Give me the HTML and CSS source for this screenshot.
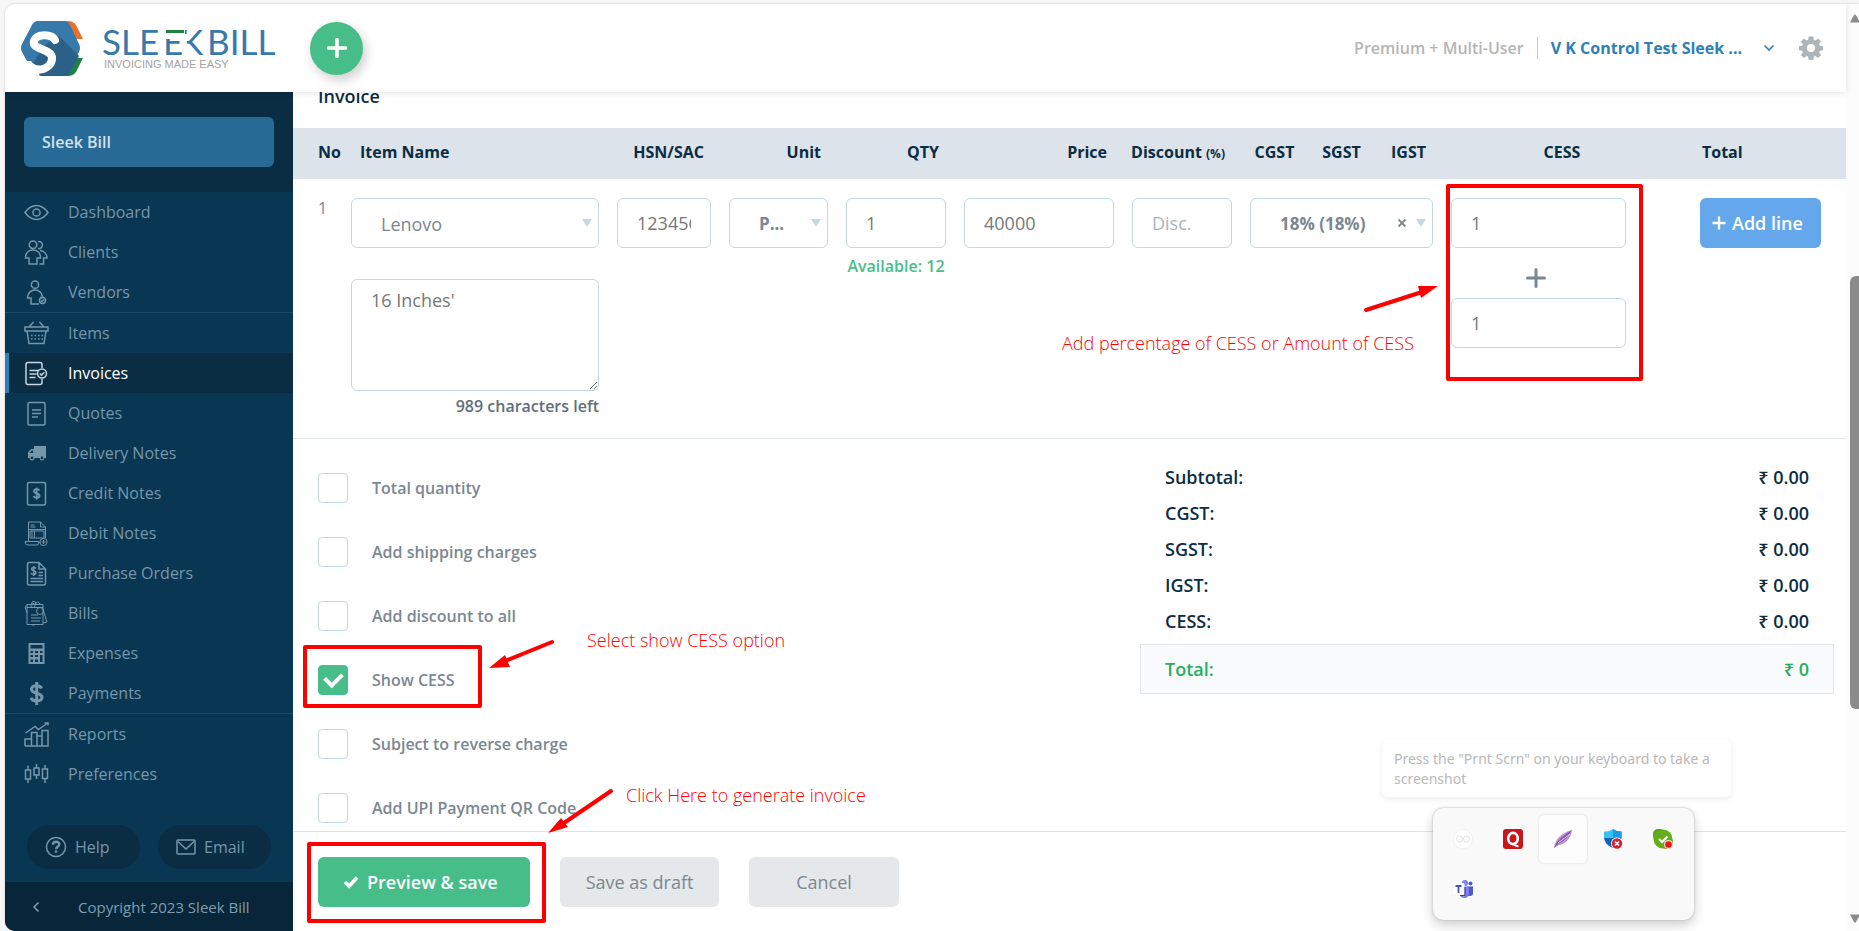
FILE: index.html
```html
<!DOCTYPE html>
<html lang="en">
<head>
<meta charset="utf-8">
<title>Sleek Bill - Invoice</title>
<link rel="stylesheet" href="styles.css">
</head>
<body>
<div class="window">
  <div class="app">
    <header class="topbar">
      <a class="logo" href="#" aria-label="Sleek Bill">
        <svg width="262" height="60" viewBox="0 0 262 60">
          <path d="M43 3h6q5 0 8 4l7 14H54z" fill="#e8702a"/>
          <path d="M64 40l-7 14q-3 4-8 4h-6l11-18z" fill="#1f8340"/>
          <path d="M19 3h25q5 0 7 4l9 19q2 4 0 8L50 54q-2 4-7 4H21q-5 0-7-4L3 34q-2-4 0-8L13 7q2-4 6-4z" fill="#3779aa"/>
          <path d="M40 18l20 20-8 15q-2 5-8 5H22l-8-13 12-18z" fill="#2b6089"/>
          <path d="M36 22c-3-6-18-7-21 1-3 9 18 7 18 17 0 11-14 15-22 8" fill="none" stroke="#fff" stroke-width="8" stroke-linecap="round"/>
          <path d="M7 43l5 0 9 15q-5 0-8-4z" fill="#fff"/>
          <text class="logo-name" x="83" y="37">SLE</text>
          <text class="logo-name" x="144" y="37">E</text>
          <text class="logo-name" x="161" y="37">K</text>
          <text class="logo-name" x="188" y="37">BILL</text>
          <rect x="144" y="10" width="22" height="11" fill="#fff"/>
          <rect x="147" y="12" width="18" height="3" fill="#1f8340"/>
          <rect x="163" y="16" width="5" height="24" fill="#fff"/>
          <text class="logo-tag" x="85" y="50">INVOICING MADE EASY</text>
        </svg>
      </a>
      <button class="add-btn" type="button" aria-label="Add new">
        <svg width="20" height="20" viewBox="0 0 20 20"><path d="M10 1.500v17M1.500 10h17" stroke="#fff" stroke-width="3.500" stroke-linecap="round"/></svg>
      </button>
      <span class="plan">Premium + Multi-User</span>
      <button class="account" type="button">V K Control Test Sleek ...
        <svg width="12" height="8" viewBox="0 0 12 8"><path d="M1.500 1.500L6 6l4.500-4.500" fill="none" stroke="#2e80b8" stroke-width="1.600"/></svg>
      </button>
      <button class="gear" type="button" aria-label="Settings">
        <svg width="24" height="24" viewBox="0 0 24 24" fill="#adb5bb"><path fill-rule="evenodd" d="M9.700.5h4.600l.5 3.200 1.600.7 2.700-2 3 3-2 2.700.7 1.600 3.200.5v4l-3.200.5-.7 1.700 2 2.600-3 3.100-2.700-2-1.600.7-.5 3.200H9.700l-.5-3.200-1.600-.7-2.700 2-3-3.100 2-2.600-.7-1.700L0 14.200v-4l3.200-.5.7-1.600-2-2.700 3-3 2.700 2 1.600-.7zM12 8a4 4 0 100 8 4 4 0 000-8z"/></svg>
      </button>
    </header>

    <div class="body">
      <aside class="sidebar">
        <div class="brand"><button class="brand-btn" type="button">Sleek Bill</button></div>
        <nav class="nav">
          <div class="nav-group">
            <a class="nav-item" href="#"><svg class="ico" viewBox="0 0 25 25"><path d="M1 12.500Q6 5.500 12.500 5.500T24 12.500Q19 19.500 12.500 19.500T1 12.500z"/><circle cx="12.500" cy="12.500" r="3.600"/></svg>Dashboard</a>
            <a class="nav-item" href="#"><svg class="ico" viewBox="0 0 25 25"><circle cx="9" cy="4.700" r="3.800"/><path d="M5 24v-6H1.500c0-5 3-8 7.500-8s7.500 3 7.500 8H13v6zM14 1.500a3.600 3.600 0 110 7M16 10.500c4 .5 7 3.500 7 7.500h-3.500v6H15.500"/></svg>Clients</a>
            <a class="nav-item" href="#"><svg class="ico" viewBox="0 0 25 25"><circle cx="11" cy="4.700" r="3.600"/><path d="M16 17.500c1.500 0 2.500-.5 2.500-1-1-4-3.500-6.500-7.500-6.500s-7.500 3-7.500 8H7v6h8"/><circle cx="18.500" cy="20.500" r="3"/><path d="M17 20.500l1 1 2-2"/></svg>Vendors</a>
          </div>
          <div class="nav-group">
            <a class="nav-item" href="#"><svg class="ico" viewBox="0 0 25 25"><path d="M1 6h23v4H1zM3 10l2 12.500h15L22 10M5 6l4.500-5M20 6l-4.500-5"/><path d="M7 14.500h12M7 18h12" stroke-dasharray="1.500 2"/></svg>Items</a>
            <a class="nav-item active" href="#"><svg class="ico" viewBox="0 0 25 25"><path d="M18 7V3.500Q18 1.500 16 1.500H4Q2 1.500 2 3.500v18q0 2 2 2h12q2 0 2-2V18M5.500 9.500h9M5.500 13h7M5.500 16.500h6"/><circle cx="18" cy="12.500" r="4.500"/><path d="M15.800 12.500l1.700 1.700 2.800-3"/></svg>Invoices</a>
            <a class="nav-item" href="#"><svg class="ico" viewBox="0 0 25 25"><rect x="4" y="1.500" width="17" height="22.500" rx="1.500"/><path d="M8 9h9M8 12.500h9M8 16h6"/></svg>Quotes</a>
            <a class="nav-item" href="#"><svg class="ico" viewBox="0 0 25 25"><path class="solid" fill-rule="evenodd" d="M10 5h12v12h-1.500a2.500 2.500 0 01-5 0h-5a2.500 2.500 0 01-5 0H4v-5.500L7 8h3zM8 9.500L5.500 12H9V9.500zM8 15.500a1.400 1.400 0 100 2.800 1.400 1.400 0 000-2.800zm10 0a1.400 1.400 0 100 2.800 1.400 1.400 0 000-2.800z"/></svg>Delivery Notes</a>
            <a class="nav-item" href="#"><svg class="ico" viewBox="0 0 25 25"><rect x="3.500" y="1.500" width="18" height="22.500" rx="1.500"/><path d="M15.500 9.500c-1-2-5.500-1.800-5.500.7 0 2.800 5.500 1.500 5.500 4.600 0 2.500-5 2.700-6 .4M12.700 6.500v12" stroke-width="1.800"/></svg>Credit Notes</a>
            <a class="nav-item" href="#"><svg class="ico thin" viewBox="0 0 25 25"><path d="M4.500 20V1h12l5 5v11M16.500 1v5h5M6.500 4h4M6.500 6h5M4.500 8.500h17M6 10h14v7H6zM8 10v7M10.500 10v7M1 20.500h14q0 3.500-2 3.500H4q-3 0-3-3.500z"/><circle cx="19.500" cy="21" r="3.600"/><path d="M17.500 21h4M19.500 19v4"/></svg>Debit Notes</a>
            <a class="nav-item" href="#"><svg class="ico" viewBox="0 0 25 25"><path d="M15 1.500H5Q3.500 1.500 3.500 3v19.500q0 1.500 1.500 1.500h15q1.500 0 1.500-1.500V8zM15 1.500V8h6.500M14.500 11.500H19M14.500 14.500H19M6.500 17.500H19M6.500 20.500H19M12 7.500c-1-1.500-4.500-1.300-4.500.6 0 2.100 4.500 1.300 4.500 3.600 0 2-4 2.200-5 .4M9.700 5v10"/></svg>Purchase Orders</a>
            <a class="nav-item" href="#"><svg class="ico thin" viewBox="0 0 25 25"><path d="M3 3.500h16v20H3zM3 6.500h16M3 12L1 6l2-1M19 8l4 13-4 1M7 14h7M7 17h10M7 20h9M8 23.500q1 2 3 0M8 4q-1-4 2-3.500t2 3M11 3q3-4 5 0"/><circle cx="9" cy="4.500" r="2"/><circle cx="16" cy="10" r="3.500"/></svg>Bills</a>
            <a class="nav-item" href="#"><svg class="ico" viewBox="0 0 25 25"><path class="solid" fill-rule="evenodd" d="M4.500 2h16v21h-16zM6.500 4v3.500h12V4zM6.500 10v2h2.500v-2zm4.500 0v2h3v-2zm5 0v2h2.500v-2zM6.500 14v2h2.500v-2zm4.500 0v2h3v-2zm5 0v7h2.500v-7zM6.500 18.500V21h2.500v-2.500zm4.500 0V21h3v-2.500z"/></svg>Expenses</a>
            <a class="nav-item" href="#"><svg class="ico bold" viewBox="0 0 25 25"><path d="M17.500 7.500c-1.500-4-10-3.500-10 .8 0 5 10.500 3 10.500 8 0 4.500-9.500 5-11 .5M12.700 1v23"/></svg>Payments</a>
          </div>
          <div class="nav-group">
            <a class="nav-item" href="#"><svg class="ico" viewBox="0 0 25 25"><path d="M1 24h23V8.500h-6V24M1 24v-7h6.500V24M7.500 17v-6.500H13V24M13 14h5M1.500 11L11 4.500l3.500 3L23 1.500M20.500 1h3.500v2.500"/></svg>Reports</a>
            <a class="nav-item" href="#"><svg class="ico" viewBox="0 0 25 25"><path d="M1.500 8h5v9h-5zM10 6h5v7h-5zM18.500 7h5v9.500h-5zM4 3.500V8M4 17v4M12.500 2v4M12.500 13v4M21 3v4M21 16.500V21"/></svg>Preferences</a>
          </div>
        </nav>
        <div class="help-row">
          <button class="pill" type="button"><svg width="22" height="22" viewBox="0 0 22 22"><circle cx="11" cy="11" r="9.500"/><path d="M7.800 8.700c.2-4 6.800-3.800 6.500-.2-.2 2-3.200 2-3.200 4.700M11 14.500v2.200" stroke-width="2.400"/></svg>Help</button>
          <button class="pill" type="button"><svg width="20" height="16" viewBox="0 0 20 16"><rect x="1" y="1" width="18" height="14" rx="1"/><path d="M2 2.500l8 7.500 8-7.500"/></svg>Email</button>
        </div>
        <footer class="side-foot">
          <button class="collapse" type="button" aria-label="Collapse"><svg width="8" height="12" viewBox="0 0 8 12"><path d="M6.500 1.500L2 6l4.500 4.500" fill="none" stroke="#7f9db0" stroke-width="1.500"/></svg></button>
          <span>Copyright 2023 Sleek Bill</span>
        </footer>
      </aside>

      <main class="content">
        <h2 class="title">Invoice</h2>
        <table class="lines">
          <colgroup><col class="c-no"><col><col class="c-hsn"><col class="c-unit"><col class="c-qty"><col class="c-price"><col class="c-disc"><col class="c-gst"><col class="c-gst"><col class="c-gst"><col class="c-cess"><col class="c-total"></colgroup>
          <thead>
            <tr><th class="first">No</th><th class="name">Item Name</th><th>HSN/SAC</th><th>Unit</th><th>QTY</th><th>Price</th><th>Discount <small>(%)</small></th><th class="mid">CGST</th><th class="mid">SGST</th><th class="mid">IGST</th><th class="mid">CESS</th><th class="last">Total</th></tr>
          </thead>
          <tbody>
            <tr>
              <td class="first num">1</td>
              <td>
                <div class="pick"><select aria-label="Item"><option>Lenovo</option></select><i class="tri"></i></div>
                <textarea class="desc" aria-label="Description">16 Inches'</textarea>
                <p class="left">989 characters left</p>
              </td>
              <td><input class="field" type="text" aria-label="HSN/SAC" value="12345678"></td>
              <td><div class="pick strong"><select aria-label="Unit"><option>P...</option></select><i class="tri"></i></div></td>
              <td><input class="field" type="text" aria-label="Quantity" value="1"><p class="avail">Available: 12</p></td>
              <td><input class="field" type="text" aria-label="Price" value="40000"></td>
              <td><input class="field" type="text" aria-label="Discount" placeholder="Disc."></td>
              <td colspan="3"><div class="pick strong"><select aria-label="GST"><option>18% (18%)</option></select><button class="clear" type="button" aria-label="Clear"><svg width="10" height="10" viewBox="0 0 10 10"><path d="M1.500 1.500l7 7M8.500 1.500l-7 7" stroke="#7b8791" stroke-width="1.800"/></svg></button><i class="tri"></i></div></td>
              <td>
                <div class="cess">
                  <input class="field" type="text" aria-label="CESS percent" value="1">
                  <svg class="cess-plus" width="20" height="20" viewBox="0 0 20 20"><path d="M10 1.500v17M1.500 10h17" stroke="#7b8791" stroke-width="3" stroke-linecap="round"/></svg>
                  <input class="field" type="text" aria-label="CESS amount" value="1">
                </div>
              </td>
              <td class="last"><button class="btn blue" type="button"><svg width="14" height="14" viewBox="0 0 14 14"><path d="M7 .5v13M.5 7h13" stroke="#fff" stroke-width="2.400"/></svg>Add line</button></td>
            </tr>
          </tbody>
        </table>

        <section class="lower">
          <div class="options">
            <label class="opt"><input type="checkbox">Total quantity</label>
            <label class="opt"><input type="checkbox">Add shipping charges</label>
            <label class="opt"><input type="checkbox">Add discount to all</label>
            <label class="opt"><input type="checkbox" checked>Show CESS</label>
            <label class="opt"><input type="checkbox">Subject to reverse charge</label>
            <label class="opt"><input type="checkbox">Add UPI Payment QR Code</label>
          </div>
          <dl class="totals">
            <div><dt>Subtotal:</dt><dd>₹ 0.00</dd></div>
            <div><dt>CGST:</dt><dd>₹ 0.00</dd></div>
            <div><dt>SGST:</dt><dd>₹ 0.00</dd></div>
            <div><dt>IGST:</dt><dd>₹ 0.00</dd></div>
            <div><dt>CESS:</dt><dd>₹ 0.00</dd></div>
            <div class="grand"><dt>Total:</dt><dd>₹ 0</dd></div>
          </dl>
        </section>

        <div class="actions">
          <button class="btn green" type="button"><svg width="16" height="14" viewBox="0 0 16 14"><path d="M2 7l4.200 4.200L14 2.500" fill="none" stroke="#fff" stroke-width="3.600"/></svg>Preview &amp; save</button>
          <button class="btn grey" type="button">Save as draft</button>
          <button class="btn grey wide" type="button">Cancel</button>
        </div>
      </main>
    </div>
  </div>
  <div class="scroll">
    <svg class="arrow-up" width="12" height="9" viewBox="0 0 12 9"><path d="M1 8.500L5 1q1-1 2 0l4 7.500z" fill="#8b8b8b"/></svg>
    <div class="thumb"></div>
    <svg class="arrow-down" width="12" height="9" viewBox="0 0 12 9"><path d="M1 .5h10L7 8q-1 1-2 0z" fill="#8b8b8b"/></svg>
  </div>
</div>

<div class="note-box box-cess"></div>
<div class="note-box box-show"></div>
<div class="note-box box-save"></div>
<p class="note note-cess">Add percentage of CESS or Amount of CESS</p>
<p class="note note-show">Select show CESS option</p>
<p class="note note-save">Click Here to generate invoice</p>
<svg class="note-arrow arrow-cess" width="80" height="32" viewBox="0 0 80 32"><path d="M4 28L60 10" stroke="red" stroke-width="4" stroke-linecap="round"/><path d="M76 4L56 4l3 12z" fill="red"/></svg>
<svg class="note-arrow arrow-show" width="72" height="34" viewBox="0 0 72 34"><path d="M67 4L20 23" stroke="red" stroke-width="4" stroke-linecap="round"/><path d="M4 30L20 17l5 12z" fill="red"/></svg>
<svg class="note-arrow arrow-save" width="72" height="50" viewBox="0 0 72 50"><path d="M67 4L17 38" stroke="red" stroke-width="4" stroke-linecap="round"/><path d="M4 46L17 31l7 9z" fill="red"/></svg>

<div class="tip">Press the "Prnt Scrn" on your keyboard to take a screenshot</div>
<div class="tray">
  <span class="cell"><svg width="20" height="20" viewBox="0 0 20 20"><circle cx="10" cy="10" r="9.500" fill="#fff" stroke="#ececec" stroke-dasharray="2 1"/><circle cx="6.500" cy="10" r="3" fill="none" stroke="#e2e2e2"/><circle cx="13.500" cy="10" r="3" fill="none" stroke="#e2e2e2"/></svg></span>
  <span class="cell"><svg width="20" height="20" viewBox="0 0 20 20"><rect width="20" height="20" rx="3" fill="#c8161d"/><ellipse cx="10" cy="9.500" rx="4.800" ry="5.600" fill="none" stroke="#fff" stroke-width="2.600"/><path d="M10 14.500q2 3 5.500 2.500" fill="none" stroke="#fff" stroke-width="2.200"/></svg></span>
  <span class="cell on"><svg width="20" height="20" viewBox="0 0 20 20"><path d="M1 19C2 10 8 4 19 1c-1 8-6 14-13 15z" fill="#b79ad0"/><path d="M1 19C4 11 9 8 18.500 1 14 12 8 12 3 17z" fill="#8a4fb3"/><path d="M5 14L17 5" stroke="#e7dcf0"/></svg></span>
  <span class="cell"><svg width="20" height="20" viewBox="0 0 20 20"><path d="M10 0q4 3 8.500 2.500V9q0 7-8.500 10z" fill="#1283da"/><path d="M10 0Q6 3 1 2.500V9h9z" fill="#35c1f1"/><path d="M10 2.500V9h8.500V2.500Q14 3 10 0z" fill="#1a9be6"/><path d="M1 9h9v10Q2 16 1 9z" fill="#0f62b8"/><circle cx="14" cy="14.500" r="6" fill="#fff"/><circle cx="14" cy="14.500" r="5.200" fill="#db1f2d"/><path d="M12 12.500l4 4M16 12.500l-4 4" stroke="#fff" stroke-width="1.600"/></svg></span>
  <span class="cell"><svg width="20" height="20" viewBox="0 0 20 20"><rect width="12" height="12" rx="5" fill="#5ba314"/><rect x="8" y="8" width="12" height="12" rx="5" fill="#5ba314"/><circle cx="10" cy="10" r="9.500" fill="#64ad1b"/><path d="M6 10l3 3 5.500-5.500" fill="none" stroke="#fff" stroke-width="2.200"/><circle cx="15.500" cy="15.500" r="4.500" fill="#f3dede"/><circle cx="15.500" cy="15.500" r="3.300" fill="#e81717"/></svg></span>
  <span class="cell"><svg width="20" height="20" viewBox="0 0 20 20"><circle cx="12" cy="4" r="3" fill="#7b83eb"/><circle cx="17.500" cy="4.500" r="2" fill="#5059c9"/><path d="M14 7.500h6V14q0 3-3 3h-3z" fill="#5059c9"/><path d="M7 7.500h9V14q0 5-4.500 5T7 15z" fill="#7b83eb"/><rect y="4" width="11.500" height="12" rx="1" fill="#fff"/><path d="M7 16.500h5V8" stroke="#3b3f7d" fill="none"/><path d="M2.500 7h6M5.500 7v7" stroke="#4b53bc" stroke-width="1.800"/></svg></span>
</div>
</body>
</html>
```
FILE: styles.css
```css
* { box-sizing: border-box; }
body { margin: 0; height: 100vh; padding: 4px 0 0 5px; background: #f6f6f6; font: 16px/24px "Open Sans", "Noto Sans", sans-serif; color: #7b8791; overflow: hidden; position: relative; }
button, input, select, textarea { font: inherit; color: inherit; margin: 0; }
button { border: 0; background: none; padding: 0; cursor: pointer; }
a { text-decoration: none; color: inherit; }
p, h2, dl, dd { margin: 0; }
svg { flex: none; }

.window { display: grid; grid-template-columns: 1fr 13px; height: 100%; background: #fcfcfc; border-radius: 10px 0 0 10px; overflow: hidden; box-shadow: 0 0 2px #bbb; }
.app { display: flex; flex-direction: column; min-width: 0; min-height: 0; }

.topbar { display: flex; align-items: center; height: 88px; flex: none; padding: 0 23px 0 14px; background: #fff; box-shadow: 0 1px 6px rgba(0,0,0,.12); position: relative; z-index: 2; }
.logo { display: flex; }
.logo-name { font: 400 35px Lato, sans-serif; fill: #3779aa; }
.logo-tag { font: 11px "Liberation Sans", Arial, sans-serif; fill: #a5a29f; }
.add-btn { display: grid; place-items: center; width: 53px; height: 53px; margin: 0 auto 0 29px; border-radius: 50%; background: #47be8a; box-shadow: 3px 5px 12px rgba(0,0,0,.2); }
.plan { padding-right: 13px; margin-right: 13px; border-right: 1px solid #c5cacf; line-height: 22px; font-weight: 600; color: #b5b5b5; }
.account { display: flex; align-items: center; gap: 21px; font-weight: 700; color: #2e80b8; margin-right: 24px; }
.gear { display: flex; }

.body { display: flex; flex: 1; min-height: 0; }
.sidebar { display: flex; flex-direction: column; width: 288px; flex: none; background: #093652; color: #7696aa; }
.brand { background: #0a2d43; padding: 25px 19px; }
.brand-btn { width: 100%; height: 50px; padding: 0 18px; border-radius: 6px; background: #276a96; color: #d3e1ea; text-align: left; font-weight: 600; }
.nav { flex: 1; min-height: 0; }
.nav-group + .nav-group { border-top: 1px solid #1c4a63; }
.nav-item { display: flex; align-items: center; gap: 19px; height: 40px; padding-left: 19px; }
.active { background: #0a2d43; color: #fff; border-left: 4px solid #2e80b8; padding-left: 15px; }
.ico { width: 25px; height: 25px; fill: none; stroke: #7696aa; stroke-width: 1.500; }
.active .ico { stroke: #c6d5df; }
.ico.thin { stroke-width: 1; }
.ico.bold { stroke-width: 3; }
.ico .solid { fill: #7696aa; stroke: none; }
.help-row { display: flex; gap: 18px; padding: 0 22px 13px; }
.pill { display: flex; align-items: center; gap: 8px; width: 113px; height: 44px; padding-left: 18px; border-radius: 22px; background: #0a2d43; }
.pill svg { fill: none; stroke: #7696aa; stroke-width: 1.500; }
.side-foot { display: flex; align-items: center; gap: 38px; height: 49px; padding-left: 27px; background: #07263a; color: #7f9db0; font-size: 15px; }
.collapse { display: flex; }

.content { display: flex; flex-direction: column; flex: 1; min-width: 0; overflow: hidden; background: #fff; position: relative; }
.title { margin: -8px 0 0; padding: 0 25px 20px; font-size: 18px; line-height: 24px; font-weight: 600; color: #0a2d43; }
.lines { width: 100%; border-collapse: collapse; table-layout: fixed; flex: none; border-bottom: 1px solid #e1e6ea; }
.c-no { width: 49px; }
.c-hsn { width: 112px; }
.c-unit { width: 117px; }
.c-qty, .c-disc { width: 118px; }
.c-price { width: 168px; }
.c-gst { width: 67px; }
.c-cess { width: 240px; }
.c-total { width: 164px; }
th { height: 51px; padding: 0 16px 4px 0; background: #dce3ea; color: #0a2d43; font-weight: 700; text-align: right; white-space: nowrap; }
th small { font-size: 12px; line-height: 16px; }
th.first { text-align: left; padding: 0 0 4px 25px; }
th.name { text-align: left; padding-left: 18px; }
th.mid { text-align: center; padding-right: 0; }
th.last { text-align: left; padding-left: 20px; }
td { padding: 19px 9px 0; height: 259px; vertical-align: top; }
td.num { padding: 17px 0 0 25px; }
td.last { padding-left: 18px; }
.field, .pick select { display: block; width: 100%; height: 50px; border: 1px solid #c5d8e0; border-radius: 6px; background: #fff; outline: 0; }
.field { padding: 0 19px; font-size: 18px; color: #777; }
.field::placeholder { color: #aab4bc; opacity: 1; }
.pick { position: relative; }
.pick select { appearance: none; padding: 2px 0 0 29px; font-size: 18px; font-weight: 500; }
.strong select { font-size: 17px; font-weight: 700; }
.tri { position: absolute; right: 7px; top: 21px; border: 5px solid transparent; border-top: 8px solid #c3d9e0; border-bottom: 0; pointer-events: none; }
.clear { position: absolute; right: 26px; top: 20px; display: flex; }
.desc { display: block; width: 100%; height: 112px; margin-top: 31px; padding: 8px 19px; border: 1px solid #c5d8e0; border-radius: 6px; font-size: 18px; color: #777; resize: vertical; outline: 0; }
.left { margin-top: 3px; text-align: right; font-weight: 600; color: #5f6f7b; }
.avail { margin-top: 6px; font-weight: 600; color: #47be8a; text-align: center; white-space: nowrap; }
.cess { display: flex; flex-direction: column; align-items: center; width: 175px; }
.cess-plus { margin: 20px 6px 10px 0; }

.btn { display: flex; align-items: center; justify-content: center; height: 50px; border-radius: 6px; font-size: 18px; font-weight: 600; color: #fff; white-space: nowrap; }
.blue { justify-content: flex-start; gap: 6px; padding-left: 12px; width: 121px; background: #64a8eb; }
.green { justify-content: flex-start; gap: 8px; padding-left: 25px; width: 212px; background: #47be8a; }
.grey { width: 159px; background: #e4e8eb; color: #7b8791; font-weight: 500; }
.wide { width: 150px; }

.lower { display: flex; justify-content: space-between; flex: 1; min-height: 0; overflow: hidden; padding: 0 12px 0 25px; }
.options { display: flex; flex-direction: column; gap: 34px; padding-top: 34px; }
.opt { display: flex; align-items: center; gap: 24px; font-weight: 600; }
.opt input { appearance: none; flex: none; width: 30px; height: 30px; border: 1px solid #c5d8e0; border-radius: 4px; background: #fff; }
.opt input:checked { display: grid; place-items: center; border-color: #47be8a; background: #47be8a; }
.opt input:checked::before { content: ""; width: 13px; height: 8px; margin-bottom: 3px; border: solid #fff; border-width: 0 0 4px 4px; transform: rotate(-45deg); }
.totals { width: 694px; padding-top: 20px; color: #0a2d43; font-size: 18px; font-weight: 600; }
.totals div { display: flex; justify-content: space-between; align-items: center; height: 36px; padding: 0 25px; }
.totals .grand { height: 50px; margin-top: 5px; padding: 0 24px; border: 1px solid #e1e6ea; background: #f9fafc; color: #27ae60; }
.actions { display: flex; flex: none; gap: 30px; height: 100px; padding: 25px; border-top: 1px solid #dfe2e5; background: #fff; }

.scroll { display: grid; grid-template-rows: 9px 253fr 433fr 205fr 9px; justify-items: end; overflow: hidden; padding: 10px 0 8px; }
.scroll svg { margin-right: -2px; }
.thumb { grid-row: 3; width: 9px; border-radius: 6px 0 0 6px; background: #8b8b8b; }
.arrow-down { grid-row: 5; }

.note-box { position: absolute; z-index: 5; border: 4px solid red; border-radius: 2px; pointer-events: none; }
.box-cess { left: 1446px; top: 184px; width: 197px; height: 197px; }
.box-show { left: 303px; top: 645px; width: 179px; height: 63px; }
.box-save { left: 307px; top: 842px; width: 239px; height: 81px; }
.note { position: absolute; z-index: 5; font: 300 18px/24px "Open Sans", sans-serif; color: red; white-space: nowrap; }
.note-cess { left: 1062px; top: 331px; }
.note-show { left: 587px; top: 628px; }
.note-save { left: 626px; top: 783px; }
.note-arrow { position: absolute; z-index: 5; }
.arrow-cess { left: 1362px; top: 282px; }
.arrow-show { left: 485px; top: 638px; }
.arrow-save { left: 544px; top: 787px; }

.tip { position: absolute; z-index: 5; left: 1382px; top: 740px; width: 349px; padding: 9px 8px 8px 12px; border-radius: 5px; background: #fefefe; box-shadow: 0 2px 6px rgba(0,0,0,.08); font: 14px/20px "Noto Sans", sans-serif; color: #b9b9b9; }
.tray { position: absolute; z-index: 5; left: 1433px; top: 808px; width: 261px; display: grid; grid-template-columns: repeat(5, 50px); grid-auto-rows: 50px; padding: 6px 5px; border-radius: 10px; background: #f9f9f9; box-shadow: 0 0 2px #aaa, 0 5px 12px rgba(0,0,0,.2); }
.cell { display: grid; place-items: center; margin: 1px; border-radius: 5px; }
.on { background: #fdfdfd; box-shadow: 0 0 2px #ccc; }
```
